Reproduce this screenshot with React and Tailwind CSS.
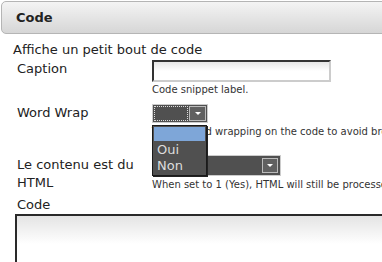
export default function App() {
  return (
    <div className="w-[382px] h-[262px] overflow-hidden bg-white text-[#222]" style={{ fontFamily: '"DejaVu Sans", Verdana, sans-serif' }}>
      <div className="ml-px mt-px w-[400px] h-[33px] rounded-tl-[5px] rounded-bl-[5px] border border-[#b5b5b5] bg-gradient-to-b from-[#f4f4f4] to-[#d6d6d6] flex items-center pl-[14px]">
        <span className="text-[13px] font-bold text-[#222]">Code</span>
      </div>
      <div className="pl-[13px] pt-[8px] text-[13px] leading-[16px]">Affiche un petit bout de code</div>
      <div className="flex pl-[17px] pt-[2px]">
        <div className="w-[135px] shrink-0 text-[13px] leading-[16px] pt-[1px]">Caption</div>
        <div className="flex flex-col">
          <div className="w-[179px] h-[22px] border-[2px] border-t-[#333] border-l-[#333] border-r-[#ccc] border-b-[#ccc] bg-gradient-to-b from-[#e6e6e6] via-white to-white" />
          <div className="text-[10px] leading-[12px] mt-[2px] text-[#333] whitespace-nowrap">Code snippet label.</div>
        </div>
      </div>
      <div className="flex pl-[17px] pt-[8px]">
        <div className="w-[135px] shrink-0 text-[13px] leading-[16px] pt-[1px]">Word Wrap</div>
        <div className="flex flex-col relative">
          <div className="w-[56px] h-[19px] bg-[#505050] border border-[#ccc] flex p-px">
            <div className="flex-1 border border-dotted border-[#ddd]" />
            <div className="w-[17px] h-[15px] ml-px bg-[#606060] border border-[#bbb] flex items-center justify-center">
              <div className="w-0 h-0 border-l-[3px] border-r-[3px] border-t-[3px] border-l-transparent border-r-transparent border-t-white" />
            </div>
          </div>
          <div className="text-[10px] leading-[12px] mt-[3px] text-[#333] whitespace-nowrap">Toggle word wrapping on the code to avoid breaking the layout.</div>
          <div className="absolute left-0 top-[21px] w-[55px] bg-[#505050] border border-[#1a1a1a] shadow-[1px_1px_0_#222] flex flex-col p-px">
            <div className="h-[14px] bg-[#7ea6d8]" />
            <div className="h-[16px] text-[13px] leading-[16px] text-[#ddd] pl-[3px] mt-[1px]">Oui</div>
            <div className="h-[16px] text-[13px] leading-[16px] text-[#ddd] pl-[3px]">Non</div>
          </div>
        </div>
      </div>
      <div className="flex pl-[17px] pt-[17px]">
        <div className="w-[135px] shrink-0 text-[13px] leading-[18px] pt-[1px]">Le contenu est du HTML</div>
        <div className="flex flex-col">
          <div className="w-[129px] h-[21px] bg-[#505050] border border-[#ccc] flex justify-end p-[2px]">
            <div className="w-[16px] h-[15px] bg-[#606060] border border-[#bbb] flex items-center justify-center">
              <div className="w-0 h-0 border-l-[3px] border-r-[3px] border-t-[3px] border-l-transparent border-r-transparent border-t-white" />
            </div>
          </div>
          <div className="text-[10px] leading-[12px] mt-[3px] text-[#333] whitespace-nowrap">When set to 1 (Yes), HTML will still be processed by the parser.</div>
        </div>
      </div>
      <div className="pl-[17px] pt-[5px] text-[13px] leading-[16px]">Code</div>
      <div className="ml-[15px] mt-[1px] w-[400px] h-[60px] border-[2px] border-[#2a2a2a] bg-gradient-to-b from-[#e4e4e4] via-white to-white" />
    </div>
  );
}
